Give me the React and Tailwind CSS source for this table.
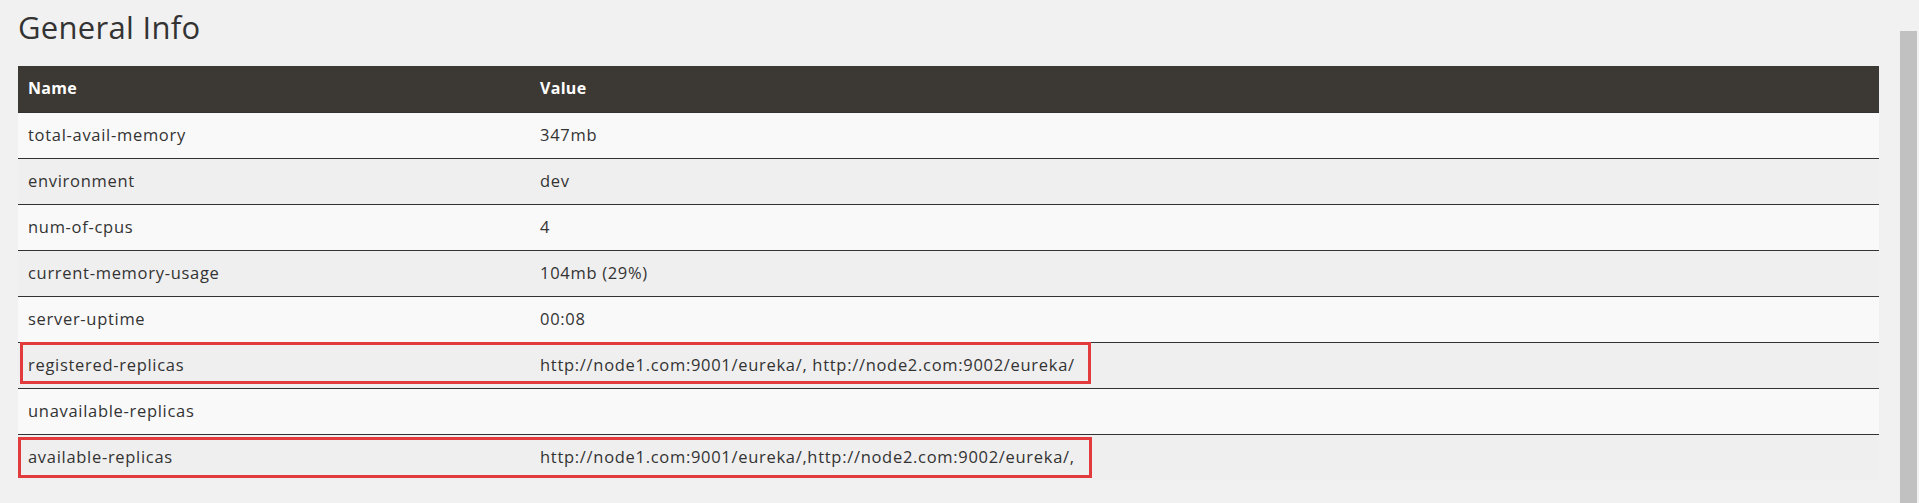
import React from "react";

const rows = [
    { name: "total-avail-memory", value: "347mb" },
    { name: "environment", value: "dev" },
    { name: "num-of-cpus", value: "4" },
    { name: "current-memory-usage", value: "104mb (29%)" },
    { name: "server-uptime", value: "00:08" },
    { name: "registered-replicas", value: "http://node1.com:9001/eureka/, http://node2.com:9002/eureka/", box: "reg" },
    { name: "unavailable-replicas", value: "" },
    { name: "available-replicas", value: "http://node1.com:9001/eureka/,http://node2.com:9002/eureka/,", box: "avail" },
];

const App = () => {
    return (
        <div
            className="flex w-full h-[503px] bg-[#f1f1f1] overflow-hidden text-[#333]"
            style={{ fontFamily: '"Open Sans", "Liberation Sans", sans-serif' }}
        >
            {/* page content */}
            <div className="w-[1900px] pl-[18px] pr-[21px]">
                <h1 className="h-[66px] pt-[8px] text-[31px] leading-[38px] font-medium text-[#333] tracking-[0.3px]">
                    General Info
                </h1>

                <div className="w-full">
                    {/* Header */}
                    <div className="flex h-[46px] items-center bg-[#3c3834] text-white text-[16px] font-bold tracking-[0.3px] pb-[2px]">
                        <div className="w-[522px] pl-[10px]">Name</div>
                        <div className="flex-1">Value</div>
                    </div>

                    {rows.map((row, i) => (
                        <div
                            key={row.name}
                            className={`relative flex h-[46px] items-center border-t border-[#333] text-[16.5px] tracking-[0.7px] ${
                                i % 2 === 0 ? "bg-[#f9f9f9]" : "bg-[#efefef]"
                            }`}
                        >
                            <div className="w-[522px] pl-[10px]">{row.name}</div>
                            <div className="flex-1">{row.value}</div>

                            {/* annotation boxes */}
                            {row.box === "reg" && (
                                <div className="absolute left-[2px] top-[-1px] w-[1071px] h-[42px] border-[3px] border-[#e23b3d]" />
                            )}
                            {row.box === "avail" && (
                                <div className="absolute left-0 top-[2px] w-[1074px] h-[41px] border-[3px] border-[#e23b3d]" />
                            )}
                        </div>
                    ))}
                </div>
            </div>

            {/* scrollbar */}
            <div className="w-[17px] mt-[31px] h-[472px] bg-[#c1c1c1]" />
        </div>
    );
};

export default App;
